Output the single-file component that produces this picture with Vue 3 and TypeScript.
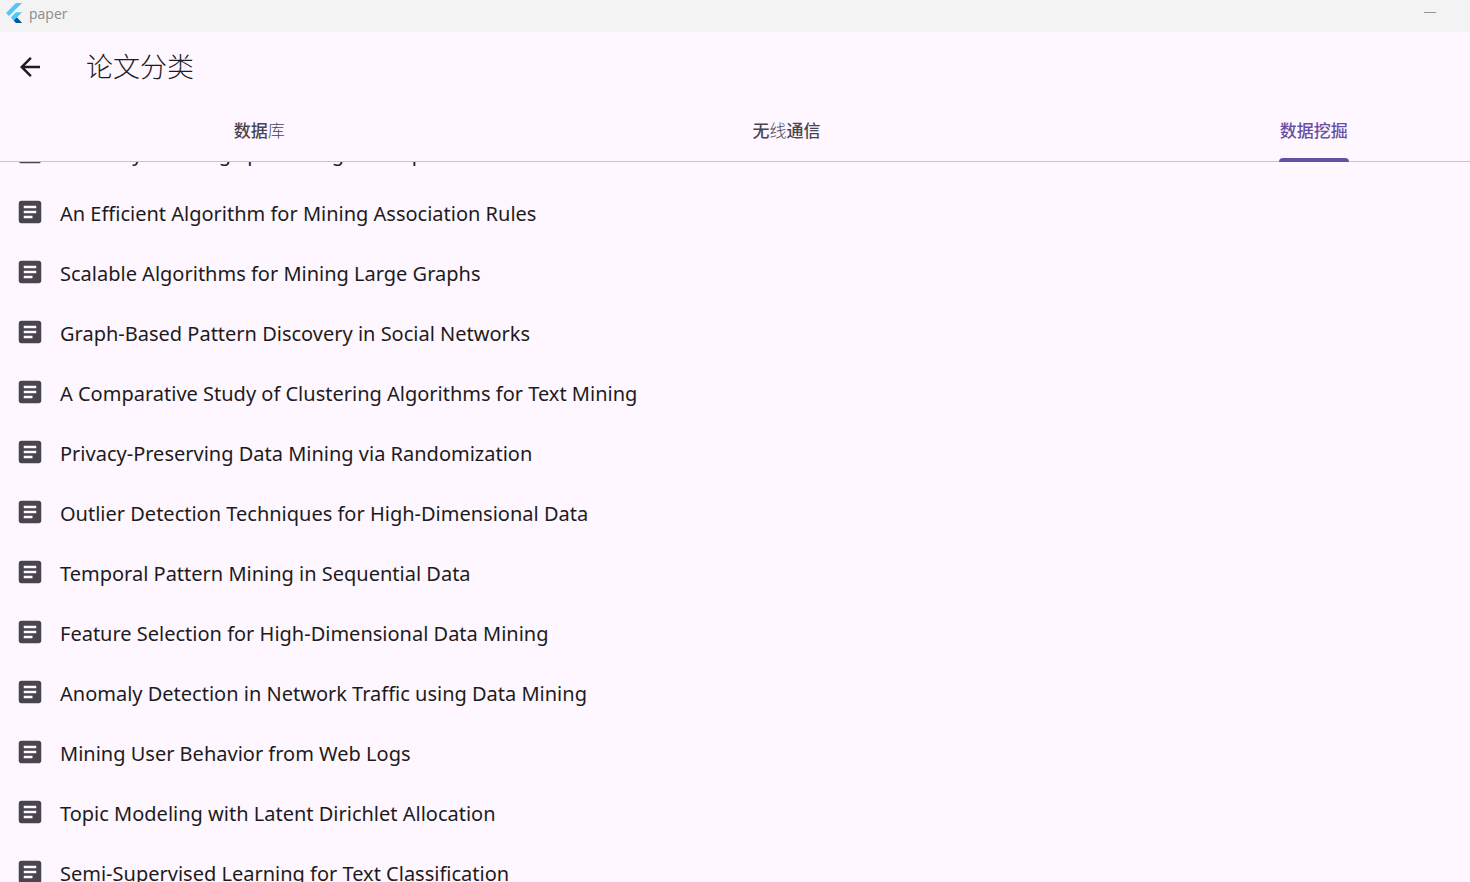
<script setup lang="ts">
import { onMounted, ref } from 'vue'

interface Glyph {
  text: string
  light?: boolean
}

interface Tab {
  id: string
  label: Glyph[]
}

const tabs: Tab[] = [
  { id: 'database', label: [{ text: '数据' }, { text: '库', light: true }] },
  { id: 'wireless', label: [{ text: '无' }, { text: '线', light: true }, { text: '通信' }] },
  { id: 'mining', label: [{ text: '数据挖掘' }] },
]

const papers: string[] = [
  'Anomaly Learning Spatializing Hadoop',
  'An Efficient Algorithm for Mining Association Rules',
  'Scalable Algorithms for Mining Large Graphs',
  'Graph-Based Pattern Discovery in Social Networks',
  'A Comparative Study of Clustering Algorithms for Text Mining',
  'Privacy-Preserving Data Mining via Randomization',
  'Outlier Detection Techniques for High-Dimensional Data',
  'Temporal Pattern Mining in Sequential Data',
  'Feature Selection for High-Dimensional Data Mining',
  'Anomaly Detection in Network Traffic using Data Mining',
  'Mining User Behavior from Web Logs',
  'Topic Modeling with Latent Dirichlet Allocation',
  'Semi-Supervised Learning for Text Classification',
]

const activeTab = ref('mining')
const list = ref<HTMLElement | null>(null)

onMounted(() => {
  if (list.value) list.value.scrollTop = 40
})
</script>

<template>
  <div class="window">
    <header class="titlebar">
      <svg class="logo" viewBox="0 0 16 20" aria-hidden="true">
        <path d="M10 0H16L3 13L0 10Z" fill="#54c5f8" />
        <path d="M10 9.200H16L11 14.500L16 20H10L4.800 14.500Z" fill="#54c5f8" />
        <path d="M7.800 17.500L11 14.500L16 20H10Z" fill="#01579b" />
      </svg>
      <span class="app-name">paper</span>
      <button class="minimize" type="button" aria-label="Minimize"></button>
    </header>

    <div class="appbar">
      <button class="back" type="button" aria-label="Back">
        <svg viewBox="0 0 24 24" aria-hidden="true">
          <path d="M20 11H7.830l5.590-5.590L12 4l-8 8 8 8 1.410-1.410L7.830 13H20v-2z" />
        </svg>
      </button>
      <h1>论文分类</h1>
    </div>

    <nav class="tabbar">
      <div class="tabs" role="tablist">
        <button
          v-for="tab in tabs"
          :key="tab.id"
          type="button"
          role="tab"
          class="tab"
          :class="{ active: tab.id === activeTab }"
          :aria-selected="tab.id === activeTab"
          @click="activeTab = tab.id"
        >
          <span v-for="part in tab.label" :key="part.text" :class="{ light: part.light }">{{ part.text }}</span>
        </button>
      </div>
    </nav>

    <ul ref="list" class="papers">
      <li v-for="paper in papers" :key="paper" class="paper">
        <svg viewBox="0 0 24 24" aria-hidden="true">
          <path d="M19 3H5c-1.100 0-2 .9-2 2v14c0 1.100.9 2 2 2h14c1.100 0 2-.9 2-2V5c0-1.100-.9-2-2-2zm-5 14H7v-2h7v2zm3-4H7v-2h10v2zm0-4H7V7h10v2z" />
        </svg>
        <span class="name">{{ paper }}</span>
      </li>
    </ul>
  </div>
</template>

<style>
body {
  margin: 0;
}
</style>

<style scoped>
.window {
  display: flex;
  flex-direction: column;
  height: 100vh;
  overflow: hidden;
  background: #fef7ff;
  color: #1d1b20;
  font-family: "Noto Sans", "Open Sans", "Noto Sans CJK SC", sans-serif;
}

button {
  margin: 0;
  padding: 0;
  border: 0;
  background: none;
  color: inherit;
  font: inherit;
}

.titlebar {
  display: flex;
  flex: none;
  align-items: center;
  height: 32px;
  padding: 0 34px 6px 6px;
  box-sizing: border-box;
  background: #f3f3f3;
}

.logo {
  width: 16px;
  height: 20px;
}

.app-name {
  margin-left: 7px;
  padding-top: 2px;
  color: #8c8c8c;
  font-family: "Open Sans", sans-serif;
  font-size: 14px;
  line-height: 22px;
}

.minimize {
  width: 12px;
  height: 12px;
  margin-left: auto;
  background: linear-gradient(#929292, #929292) center top 5px / 100% 1px no-repeat;
}

.appbar {
  display: flex;
  flex: none;
  align-items: center;
  height: 70px;
  padding: 0 15px;
}

.back {
  display: flex;
}

.back svg {
  width: 30px;
  height: 30px;
  fill: #1d1b20;
}

h1 {
  margin: 0 0 2px 41px;
  font-family: "Noto Sans CJK SC", sans-serif;
  font-size: 27px;
  font-weight: 300;
  line-height: 36px;
}

.tabbar {
  flex: none;
  height: 60px;
  box-sizing: border-box;
  box-shadow: inset 0 -1px #cac4d0;
  overflow: hidden;
}

.tabs {
  display: grid;
  grid-template-columns: 518fr 536fr 518fr;
  justify-items: center;
  width: 107%;
  height: 100%;
}

.tab {
  position: relative;
  padding: 0 1px 4px;
  color: #49454f;
  font-family: "Noto Sans CJK SC", sans-serif;
  font-size: 17px;
  font-weight: 500;
  line-height: 28px;
}

.tab .light {
  font-weight: 300;
}

.tab.active {
  color: #6750a4;
}

.tab.active::after {
  content: "";
  position: absolute;
  right: 0;
  bottom: 0;
  left: 0;
  height: 4px;
  border-radius: 4px 4px 0 0;
  background: #6750a4;
}

.papers {
  flex: 1;
  min-height: 0;
  margin: 0;
  padding: 0;
  overflow-y: auto;
  list-style: none;
  scrollbar-width: none;
}

.paper {
  display: flex;
  align-items: center;
  height: 60px;
  padding: 0 15px;
}

.paper svg {
  flex: none;
  width: 30px;
  height: 30px;
  fill: #49454f;
}

.name {
  margin: 3px 0 0 15px;
  font-size: 20px;
  font-weight: 380;
  font-variant-ligatures: none;
  line-height: 30px;
  white-space: nowrap;
}
</style>
